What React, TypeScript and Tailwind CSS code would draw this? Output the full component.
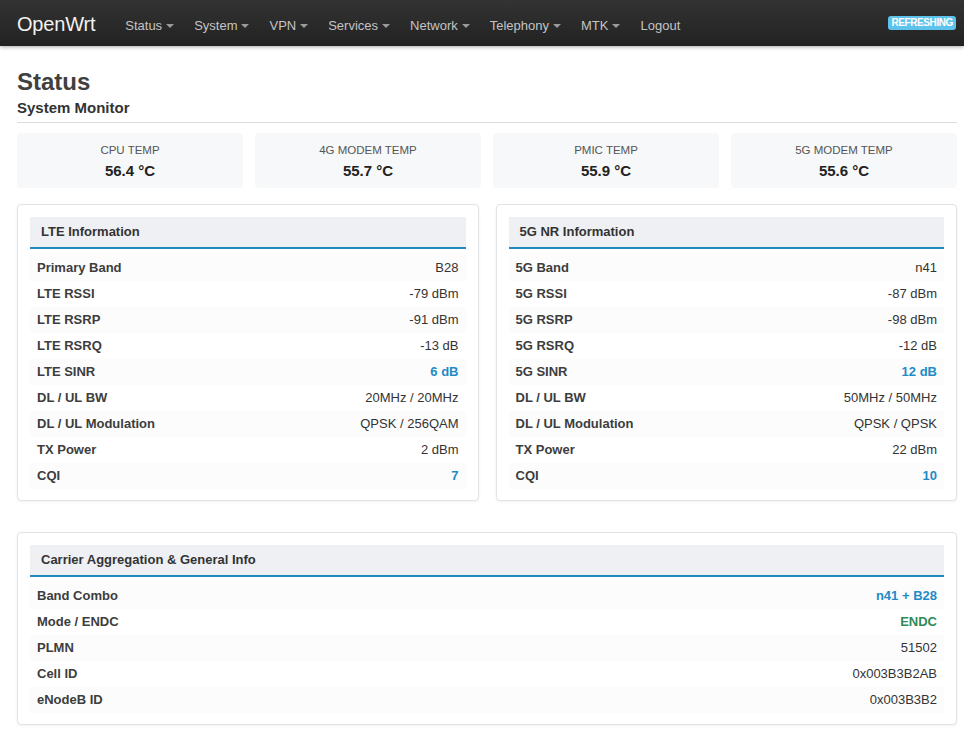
import React from 'react'

type Row = { label: string; value: string; tone?: 'blue' | 'green' }

const temps = [
  { label: 'CPU TEMP', value: '56.4 °C' },
  { label: '4G MODEM TEMP', value: '55.7 °C' },
  { label: 'PMIC TEMP', value: '55.9 °C' },
  { label: '5G MODEM TEMP', value: '55.6 °C' },
]

const lteRows: Row[] = [
  { label: 'Primary Band', value: 'B28' },
  { label: 'LTE RSSI', value: '-79 dBm' },
  { label: 'LTE RSRP', value: '-91 dBm' },
  { label: 'LTE RSRQ', value: '-13 dB' },
  { label: 'LTE SINR', value: '6 dB', tone: 'blue' },
  { label: 'DL / UL BW', value: '20MHz / 20MHz' },
  { label: 'DL / UL Modulation', value: 'QPSK / 256QAM' },
  { label: 'TX Power', value: '2 dBm' },
  { label: 'CQI', value: '7', tone: 'blue' },
]

const nrRows: Row[] = [
  { label: '5G Band', value: 'n41' },
  { label: '5G RSSI', value: '-87 dBm' },
  { label: '5G RSRP', value: '-98 dBm' },
  { label: '5G RSRQ', value: '-12 dB' },
  { label: '5G SINR', value: '12 dB', tone: 'blue' },
  { label: 'DL / UL BW', value: '50MHz / 50MHz' },
  { label: 'DL / UL Modulation', value: 'QPSK / QPSK' },
  { label: 'TX Power', value: '22 dBm' },
  { label: 'CQI', value: '10', tone: 'blue' },
]

const caRows: Row[] = [
  { label: 'Band Combo', value: 'n41 + B28', tone: 'blue' },
  { label: 'Mode / ENDC', value: 'ENDC', tone: 'green' },
  { label: 'PLMN', value: '51502' },
  { label: 'Cell ID', value: '0x003B3B2AB' },
  { label: 'eNodeB ID', value: '0x003B3B2' },
]

const menu = ['Status', 'System', 'VPN', 'Services', 'Network', 'Telephony', 'MTK']

function Caret() {
  return (
    <span className="inline-block ml-[4px] w-0 h-0 border-l-[4px] border-r-[4px] border-t-[4px] border-l-transparent border-r-transparent border-t-[#9a9a9a] align-middle" />
  )
}

function Panel({ title, rows }: { title: string; rows: Row[] }) {
  return (
    <div className="bg-white border border-[#e3e3e3] rounded-[4px] shadow-[0_1px_3px_rgba(0,0,0,0.06)] px-3 pt-3 pb-[11px]">
      <div className="h-[32px] bg-[#eef0f3] border-b-2 border-[#1d8bbd] flex items-center px-[11px] text-[13px] font-bold text-[#333]">
        {title}
      </div>
      <div className="mt-[6px]">
        {rows.map((r, i) => (
          <div
            key={r.label}
            className={`h-[26px] flex items-center justify-between px-[7px] text-[13px] ${i % 2 === 0 ? 'bg-[#fcfcfd]' : 'bg-white'}`}
          >
            <span className="font-bold text-[#3d3d3d]">{r.label}</span>
            <span
              className={
                r.tone === 'blue'
                  ? 'font-bold text-[#1f8bc6]'
                  : r.tone === 'green'
                    ? 'font-bold text-[#2f8a5a]'
                    : 'text-[#333]'
              }
            >
              {r.value}
            </span>
          </div>
        ))}
      </div>
    </div>
  )
}

export default function App() {
  return (
    <div className="min-h-screen bg-white font-['Liberation_Sans',Arial,sans-serif]">
      {/* Navbar */}
      <div className="h-[46px] bg-gradient-to-b from-[#333333] to-[#222222] shadow-[0_1px_4px_rgba(0,0,0,0.35)] flex items-center pt-[5px] px-[17px]">
        <span className="text-[20px] text-[#f2f2f2] mr-[20px] mt-[-3px] tracking-[-0.2px]">OpenWrt</span>
        {menu.map((m) => (
          <span key={m} className="px-[10px] text-[13px] text-[#c4c4c4] flex items-center">
            {m}
            <Caret />
          </span>
        ))}
        <span className="px-[10px] text-[13px] text-[#c4c4c4]">Logout</span>
        <span className="ml-auto mr-[-9px] mt-[-5px] h-[14px] px-[3px] rounded-[3px] bg-[#5ec3ec] text-white text-[10px] font-bold leading-[14px] tracking-[-0.4px]">
          REFRESHING
        </span>
      </div>

      <div className="ml-[17px] w-[940px]">
        {/* Headings */}
        <h2 className="mt-[21px] text-[24px] font-bold text-[#404040] leading-[30px]">Status</h2>
        <h3 className="mt-[2px] pb-[5px] border-b border-[#dcdcdc] text-[15px] font-bold text-[#333] leading-[18px]">
          System Monitor
        </h3>

        {/* Temperatures */}
        <div className="grid grid-cols-4 gap-[12px] mt-[10px]">
          {temps.map((t) => (
            <div key={t.label} className="h-[55px] rounded-[4px] bg-[#f6f8f9] flex flex-col items-center justify-center">
              <span className="text-[11.5px] text-[#555] leading-[14px]">{t.label}</span>
              <span className="mt-[6px] text-[15px] font-bold text-[#222] leading-[16px]">{t.value}</span>
            </div>
          ))}
        </div>

        {/* LTE / NR */}
        <div className="grid grid-cols-2 gap-[17px] mt-[16px]">
          <Panel title="LTE Information" rows={lteRows} />
          <Panel title="5G NR Information" rows={nrRows} />
        </div>

        {/* Carrier aggregation */}
        <div className="mt-[31px] mb-[20px]">
          <Panel title="Carrier Aggregation & General Info" rows={caRows} />
        </div>
      </div>
    </div>
  )
}
